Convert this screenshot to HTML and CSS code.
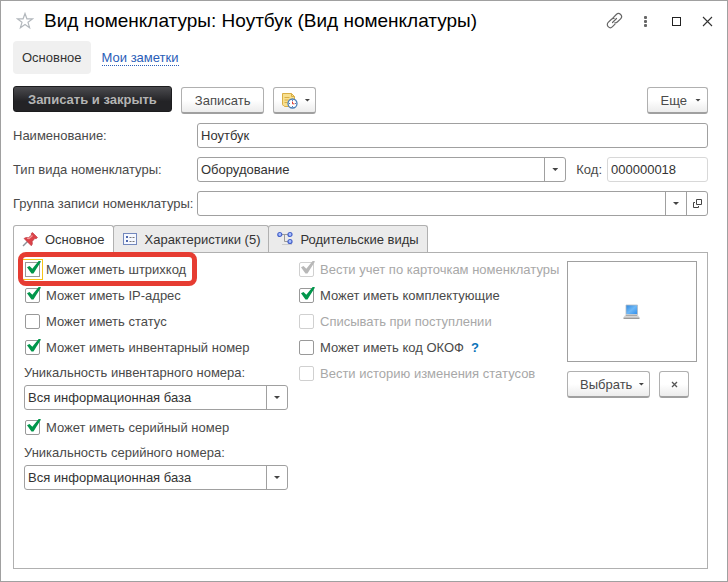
FILE: index.html
```html
<!DOCTYPE html>
<html lang="ru">
<head>
    <meta charset="UTF-8">
    <meta name="viewport" content="width=device-width, initial-scale=1.0">
    <title>Вид номенклатуры: Ноутбук</title>
    <link rel="stylesheet" href="styles.css">
</head>
<body>
    <div class="window">
        <header class="titlebar">
            <button class="icon-btn" type="button" aria-label="Добавить в избранное">
                <svg width="18" height="18" viewBox="0 0 18 18"><path d="M9 1.500l1.900 5.300 5.600.1-4.500 3.400 1.600 5.500L9 12.600l-4.600 3.200 1.600-5.500L1.500 6.900l5.600-.1z" fill="#fff" stroke="#b3b8bd" stroke-width="1.200"/></svg>
            </button>
            <h1>Вид номенклатуры: Ноутбук (Вид номенклатуры)</h1>
            <div class="window-btns">
                <button class="icon-btn" type="button" aria-label="Ссылка">
                    <svg width="18" height="18" viewBox="0 0 18 18" fill="none" stroke="#666" stroke-width="1.200" stroke-linecap="round"><path d="M7 5.800l3.300-3.300a3 3 0 0 1 4.300 4.300L11.300 10a3 3 0 0 1-2.500.8"/><path d="M9 12.200l-2.500 2.500a3 3 0 0 1-4.300-4.300L5.500 7.200A3 3 0 0 1 8 6.400"/><path d="M6.500 10.500l4-4"/></svg>
                </button>
                <button class="icon-btn" type="button" aria-label="Меню">
                    <svg width="18" height="18" viewBox="0 0 18 18" fill="#666"><rect x="7" y="4" width="3" height="3" rx="1"/><rect x="7" y="8" width="3" height="3" rx="1"/><rect x="7" y="12" width="3" height="3" rx="1"/></svg>
                </button>
                <button class="icon-btn" type="button" aria-label="Развернуть">
                    <svg width="18" height="18" viewBox="0 0 18 18"><rect x="4.500" y="5.500" width="8" height="8" fill="none" stroke="#222"/></svg>
                </button>
                <button class="icon-btn" type="button" aria-label="Закрыть">
                    <svg width="18" height="18" viewBox="0 0 18 18"><path d="M4 5l9 9M13 5l-9 9" fill="none" stroke="#333" stroke-width="1.100"/></svg>
                </button>
            </div>
        </header>

        <nav class="nav">
            <a class="nav-item active" href="#main">Основное</a>
            <a class="nav-link" href="#notes">Мои заметки</a>
        </nav>

        <div class="toolbar">
            <button class="btn primary" type="button">Записать и закрыть</button>
            <button class="btn" type="button">Записать</button>
            <button class="btn btn-icon" type="button" aria-label="Отложить">
                <svg width="17" height="17" viewBox="0 0 17 17">
                    <path d="M1.500 1.500h9l3 3v10h-10c0-1.500-2-.5-2-2z" fill="#f7df8f" stroke="#d9ae45"/>
                    <path d="M10.500 1.500v3h3M3.500 5.500h5M3.500 8h4M3.500 10.500h3" fill="none" stroke="#d9ae45"/>
                    <circle cx="11.500" cy="11.500" r="4.500" fill="#fff" stroke="#4b7fb8" stroke-width="1.300"/>
                    <path d="M11.500 8v1M11.500 14v1M8 11.500h1M14 11.500h1" stroke="#4b7fb8"/>
                    <path d="M11.500 9.500v2.300h2" fill="none" stroke="#e03a2f"/>
                </svg>
                <span class="caret"></span>
            </button>
            <button class="btn btn-more" type="button">Еще <span class="caret"></span></button>
        </div>

        <div class="fields">
            <label for="name">Наименование:</label>
            <input class="box" id="name" type="text" value="Ноутбук">

            <label for="type">Тип вида номенклатуры:</label>
            <div class="field-row">
                <div class="box combo">
                    <select id="type"><option>Оборудование</option></select>
                    <span class="combo-btn"><span class="caret"></span></span>
                </div>
                <label for="code">Код:</label>
                <input class="box code" id="code" type="text" value="000000018" readonly>
            </div>

            <label for="group">Группа записи номенклатуры:</label>
            <div class="box combo">
                <input id="group" type="text">
                <button class="combo-btn" type="button" aria-label="Выбрать из списка"><span class="caret"></span></button>
                <button class="combo-btn" type="button" aria-label="Открыть">
                    <svg width="11" height="11" viewBox="0 0 11 11" fill="none" stroke="#444"><path d="M4.500 1.500h5v5h-5z"/><path d="M3 4.500H1.500v5h5V8"/></svg>
                </button>
            </div>
        </div>

        <div class="tabs">
            <button class="tab active" type="button">
                <svg width="16" height="16" viewBox="0 0 16 16">
                    <path d="M1 14l5-5" stroke="#8b9299" stroke-width="1.500"/>
                    <path d="M2 6.500l2-1 2.500.2 3-2.700-.3-1.500L10.500.500l5 5-1.300 1.200-1.400-.2-2.600 3 .2 2.500-1.100 1.800z" fill="#dc4248" stroke="#b8343c" stroke-width=".6"/>
                    <path d="M5 6.500l2 .2 3.500-3.200" fill="none" stroke="#f49a98" stroke-width="1.200"/>
                </svg>
                Основное
            </button>
            <button class="tab" type="button">
                <svg width="16" height="16" viewBox="0 0 16 16">
                    <rect x="1.500" y="2.500" width="13" height="11" fill="#f5f8ff" stroke="#7388bd"/>
                    <path d="M4 5h2v2H4zM4 9h2v2H4z" fill="#4e68ad"/>
                    <path d="M7.500 6.500h2M10.500 6.500h2M7.500 10.500h2M10.500 10.500h2" stroke="#777"/>
                </svg>
                Характеристики (5)
            </button>
            <button class="tab" type="button">
                <svg width="16" height="16" viewBox="0 0 16 16">
                    <path d="M5 3.500h6M7.500 3.500v7H11" fill="none" stroke="#999"/>
                    <g fill="#a9c0ff" stroke="#4460c8" stroke-width="1.200"><circle cx="2.800" cy="3.500" r="2"/><circle cx="13" cy="3.500" r="2"/><circle cx="13" cy="10.500" r="2"/></g>
                    <path d="M5 13.500h10" stroke="#ccc"/>
                </svg>
                Родительские виды
            </button>
        </div>

        <main class="panel">
            <div class="col col-left">
                <label class="check marked"><input type="checkbox" checked>Может иметь штрихкод</label>
                <label class="check"><input type="checkbox" checked>Может иметь IP-адрес</label>
                <label class="check"><input type="checkbox">Может иметь статус</label>
                <label class="check"><input type="checkbox" checked>Может иметь инвентарный номер</label>
                <label class="caption" for="inv">Уникальность инвентарного номера:</label>
                <div class="box combo">
                    <select id="inv"><option>Вся информационная база</option></select>
                    <span class="combo-btn"><span class="caret"></span></span>
                </div>
                <label class="check"><input type="checkbox" checked>Может иметь серийный номер</label>
                <label class="caption" for="serial">Уникальность серийного номера:</label>
                <div class="box combo">
                    <select id="serial"><option>Вся информационная база</option></select>
                    <span class="combo-btn"><span class="caret"></span></span>
                </div>
            </div>

            <div class="col col-mid">
                <label class="check disabled"><input type="checkbox" checked disabled>Вести учет по карточкам номенклатуры</label>
                <label class="check"><input type="checkbox" checked>Может иметь комплектующие</label>
                <label class="check disabled"><input type="checkbox" disabled>Списывать при поступлении</label>
                <div class="check-row">
                    <label class="check"><input type="checkbox">Может иметь код ОКОФ</label>
                    <a class="help" href="#help">?</a>
                </div>
                <label class="check disabled"><input type="checkbox" disabled>Вести историю изменения статусов</label>
            </div>

            <div class="picture">
                <div class="preview">
                    <svg width="18" height="16" viewBox="0 0 18 16">
                        <defs><linearGradient id="screen" x1="0" y1="0" x2="1" y2="1"><stop offset="0" stop-color="#2f86dc"/><stop offset=".5" stop-color="#6db8f7"/><stop offset="1" stop-color="#2f8cea"/></linearGradient></defs>
                        <path d="M3 1h11.500v9.500H3z" fill="url(#screen)" stroke="#b5bcc4" stroke-width=".8"/>
                        <path d="M2.500 10.500h12l2 3H.500z" fill="#d5d5d5"/>
                        <path d="M.500 13.500h16v1.500H.500z" fill="#9a9a9a"/>
                        <path d="M3 11.500h11" stroke="#aaa"/>
                    </svg>
                </div>
                <div class="picture-btns">
                    <button class="btn btn-select" type="button">Выбрать <span class="caret"></span></button>
                    <button class="btn btn-clear" type="button" aria-label="Очистить">
                        <svg width="7" height="7" viewBox="0 0 7 7"><path d="M1 1l5 5M6 1L1 6" stroke="#555" stroke-width="1.300"/></svg>
                    </button>
                </div>
            </div>
        </main>
    </div>
</body>
</html>
```
FILE: styles.css
```css
* {
    box-sizing: border-box;
}
body {
    margin: 0;
    background: #fff;
    color: #4a4a4a;
    font-family: "Liberation Sans", Arial, sans-serif;
    font-size: 13px;
}
button, input, select {
    font: inherit;
    color: inherit;
    margin: 0;
}
.window {
    display: flex;
    flex-direction: column;
    min-height: 100vh;
    padding: 0 19px 12px 12px;
    border: 1px solid #a0a0a0;
}

/* title */
.titlebar {
    display: flex;
    align-items: center;
    height: 40px;
    gap: 10px;
    padding-left: 3px;
    margin-right: -9px;
}
.titlebar h1 {
    flex: 1;
    margin: 0;
    color: #000;
    font-size: 19px;
    font-weight: normal;
    white-space: nowrap;
}
.icon-btn {
    display: flex;
    padding: 0;
    border: 0;
    background: none;
}
.window-btns {
    display: flex;
    gap: 13px;
}

/* navigation */
.nav {
    display: flex;
    align-items: center;
    gap: 11px;
    height: 33px;
}
.nav-item {
    padding: 0 9px;
    line-height: 33px;
    border-radius: 4px;
    background: #f0f0f0;
    color: #333;
    text-decoration: none;
}
.nav-link {
    color: #2a5db8;
    text-decoration: none;
    border-bottom: 1px dotted #2a5db8;
}

/* buttons */
.toolbar {
    display: flex;
    align-items: flex-end;
    gap: 9px;
    height: 28px;
    margin-top: 12px;
}
.btn {
    display: flex;
    align-items: center;
    justify-content: center;
    gap: 6px;
    height: 27px;
    padding: 0 13px;
    border: 1px solid #b0b0b0;
    border-bottom: 2px solid #a0a0a0;
    border-radius: 3px;
    background: linear-gradient(#fff 50%, #ececec);
    white-space: nowrap;
}
.btn.primary {
    align-self: flex-start;
    height: 26px;
    padding: 0 14px;
    border: 1px solid #1c1c1e;
    background: linear-gradient(#4b4b4f, #232326 60%);
    color: #b4b4b4;
    font-weight: bold;
}
.btn-icon {
    padding: 0 5px 0 7px;
}
.btn-more {
    margin-left: auto;
    padding: 0 6px 0 13px;
    gap: 8px;
}
.caret {
    width: 6px;
    height: 3px;
    background: #444;
    clip-path: polygon(0 0, 100% 0, 50% 100%);
}

/* fields */
.fields {
    display: grid;
    grid-template-columns: 184px 1fr;
    align-items: center;
    row-gap: 9px;
    margin-top: 9px;
}
.fields label {
    white-space: nowrap;
}
.field-row {
    display: flex;
    align-items: center;
    gap: 10px;
}
.field-row .combo {
    flex: 1;
}
.box {
    width: 100%;
    height: 25px;
    padding: 0 3px;
    border: 1px solid #a0a0a0;
    border-radius: 3px;
    background: #fff;
    color: #333;
}
.box.code {
    width: 101px;
    margin-left: -5px;
    border-color: #d8d8d8;
}
.combo {
    display: flex;
    padding: 0;
}
.combo select, .combo input {
    appearance: none;
    flex: 1;
    min-width: 0;
    padding: 0 3px;
    border: 0;
    background: none;
}
.combo-btn {
    display: flex;
    align-items: center;
    justify-content: center;
    width: 21px;
    padding: 0;
    border: 0;
    border-left: 1px solid #a0a0a0;
    background: none;
}

/* tabs */
.tabs {
    display: flex;
    margin-top: 9px;
}
.tab {
    display: flex;
    align-items: center;
    gap: 7px;
    height: 27px;
    padding: 0 8px;
    border: 1px solid #b0b0b0;
    border-bottom: 0;
    border-radius: 3px 3px 0 0;
    background: #ebebeb;
    color: #333;
}
.tab + .tab {
    margin-left: -1px;
}
.tab.active {
    height: 28px;
    margin-bottom: -1px;
    background: #fff;
    z-index: 1;
}
.panel {
    display: flex;
    flex: 1;
    align-items: flex-start;
    padding: 3px 10px;
    border: 1px solid #b0b0b0;
}
.col {
    display: flex;
    flex-direction: column;
}
.col-left {
    width: 264px;
    margin-right: 11px;
}
.col-left .combo {
    margin-bottom: 4px;
}
.check, .caption {
    display: flex;
    align-items: center;
    height: 26px;
    white-space: nowrap;
}
.caption {
    height: 25px;
}
.check {
    position: relative;
    gap: 6px;
}
.col-left .check {
    padding-left: 1px;
}
.check input {
    appearance: none;
    position: relative;
    width: 15px;
    height: 15px;
    border: 1px solid #999;
    border-radius: 2px;
    background: #fff;
}
.check input:checked::after {
    content: "";
    position: absolute;
    left: 1px;
    top: -2px;
    width: 14px;
    height: 13px;
    background: #00964b;
    clip-path: polygon(0 52%, 18% 42%, 38% 64%, 86% 0, 100% 8%, 46% 100%, 32% 100%);
}
.check.disabled {
    color: #a8a8a8;
}
.check.disabled input {
    border-color: #d0d0d0;
}
.check.disabled input:checked::after {
    background: #b8b8b8;
}
.check-row {
    display: flex;
    align-items: center;
    gap: 7px;
}
.help {
    color: #0a72b8;
    font-weight: bold;
    text-decoration: none;
}

/* highlighted option */
.marked {
    align-self: flex-start;
}
.marked::before {
    content: "";
    position: absolute;
    top: -4px;
    bottom: -4px;
    left: -6px;
    right: -11px;
    border: 5px solid #e63c32;
    border-radius: 8px;
    z-index: 2;
}
.check.marked input {
    border-radius: 0;
    outline: 1px solid #f5c518;
    outline-offset: 2px;
}

/* picture */
.picture {
    width: 130px;
    margin: 5px 0 0 auto;
}
.preview {
    display: flex;
    align-items: center;
    justify-content: center;
    height: 101px;
    border: 1px solid #a0a0a0;
}
.picture-btns {
    display: flex;
    gap: 9px;
    margin-top: 9px;
}
.btn-select {
    padding: 0 5px 0 12px;
}
.btn-clear {
    width: 30px;
    padding: 0;
}
```
